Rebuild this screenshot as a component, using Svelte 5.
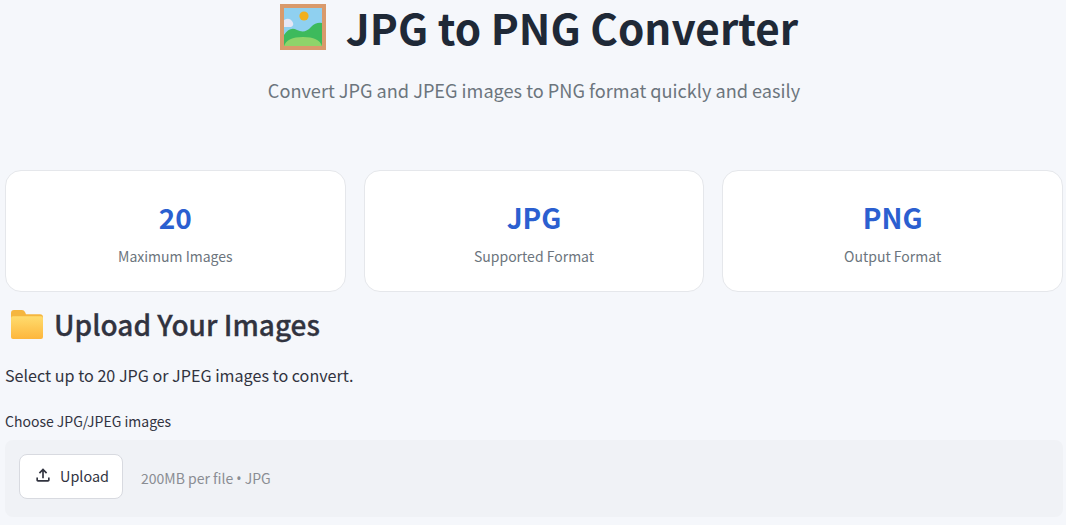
<script>
  const stats = [
    { value: '20', label: 'Maximum Images' },
    { value: 'JPG', label: 'Supported Format' },
    { value: 'PNG', label: 'Output Format' },
  ];
</script>

<div class="page">
  <header class="hero">
    <h1>
      <svg class="picture" viewBox="0 0 46 46" width="46" height="46" aria-hidden="true">
        <rect x="0" y="0" width="46" height="46" fill="#d99a6c"/>
        <rect x="4" y="4" width="38" height="38" fill="#8fd0f0"/>
        <circle cx="24" cy="12" r="4.6" fill="#f2b01e"/>
        <path d="M4 16q5-3 8 1t-1 6H4z" fill="#e6e6f5"/>
        <path d="M4 31q6-9 13-5 8 4 14-3 5-5 11-4v23H4z" fill="#3dba5c"/>
        <path d="M4 42q3-9 19-9t19 9z" fill="#8fd46a"/>
      </svg>
      <span>JPG to PNG Converter</span>
    </h1>
    <p class="subtitle">Convert JPG and JPEG images to PNG format quickly and easily</p>
  </header>

  <section class="stats">
    {#each stats as s}
      <div class="card">
        <div class="value">{s.value}</div>
        <div class="label">{s.label}</div>
      </div>
    {/each}
  </section>

  <h2>
    <svg class="folder" viewBox="1 1 32 28" width="32" height="29" preserveAspectRatio="none" aria-hidden="true">
      <defs>
        <linearGradient id="fold" x1="0" y1="0" x2="0" y2="1">
          <stop offset="0" stop-color="#ffdc6e"/>
          <stop offset="1" stop-color="#fdb63c"/>
        </linearGradient>
      </defs>
      <path d="M1 4q0-3 3-3h8q2 0 3 2l1 2h14q3 0 3 3v2H1z" fill="#f5b63f"/>
      <rect x="1" y="7" width="32" height="22" rx="2" fill="url(#fold)"/>
    </svg>
    <span>Upload Your Images</span>
  </h2>

  <p class="intro">Select up to 20 JPG or JPEG images to convert.</p>

  <div class="field-label">Choose JPG/JPEG images</div>
  <div class="dropzone">
    <button class="upload">
      <svg viewBox="0 0 24 24" width="20" height="20" aria-hidden="true">
        <path d="M18 15v3H6v-3H4v3c0 1.1.9 2 2 2h12c1.1 0 2-.9 2-2v-3zM7 9l1.41 1.41L11 7.83V16h2V7.83l2.59 2.58L17 9l-5-5z" fill="#31333f"/>
      </svg>
      Upload
    </button>
    <span class="hint">200MB per file <span class="dot">•</span> JPG</span>
  </div>
</div>

<style>
  :global(body) {
    margin: 0;
    background: #f5f7fb;
    overflow: hidden;
  }

  .page {
    height: 525px;
    padding: 0 3px 0 5px;
    box-sizing: border-box;
    overflow: hidden;
    font-family: "Noto Sans CJK SC", "Noto Sans", sans-serif;
    color: #31333f;
  }

  .hero { text-align: center; }

  h1 {
    margin: 0;
    height: 54px;
    display: flex; align-items: center; justify-content: center; gap: 20px;
    font-size: 42.2px; font-weight: 700; line-height: 54px;
    color: #1f2937;
    padding-left: 10px;
  }

  .subtitle {
    margin: 20px 0 0;
    font-size: 18.15px; line-height: 32px;
    color: #6c757d;
  }

  .stats {
    display: grid;
    grid-template-columns: repeat(3, 1fr);
    gap: 18px;
    margin-top: 64px;
  }

  .card {
    height: 122px;
    box-sizing: border-box;
    padding-top: 2px;
    background: #fff;
    border: 1px solid #e5e7eb;
    border-radius: 16px;
    display: flex; flex-direction: column; align-items: center; justify-content: center;
  }
  .value {
    font-size: 28px; font-weight: 700; line-height: 40px;
    color: #2b5fd0;
  }
  .label {
    margin-top: 8px;
    font-size: 14px; line-height: 22px;
    color: #6c757d;
  }

  h2 {
    margin: 10px 0 0;
    display: flex; align-items: center; gap: 11px;
    font-size: 28px; font-weight: 500; line-height: 44px;
    -webkit-text-stroke: 0.3px #31333f;
    color: #31333f;
    padding-left: 6px;
  }

  .intro {
    margin: 16px 0 0;
    font-size: 16.14px; line-height: 26px;
    color: #31333f;
  }

  .field-label {
    margin-top: 23px;
    font-size: 14px; line-height: 20px;
    color: #31333f;
  }

  .dropzone {
    margin-top: 9px;
    height: 77px;
    box-sizing: border-box;
    background: #f0f2f6;
    border-radius: 8px;
    padding: 0 14px 5px;
    display: flex; align-items: center; gap: 18px;
  }

  .upload {
    height: 45px; width: 104px;
    box-sizing: border-box;
    display: flex; align-items: center; justify-content: center; gap: 7px;
    background: #fff;
    border: 1px solid #d8dae0;
    border-radius: 8px;
    font-family: inherit; font-size: 14.4px;
    color: #31333f;
    padding: 0 0 2px;
  }

  .hint {
    font-size: 14px;
    color: #8a8d93;
    padding-top: 3px;
  }
  .dot { font-family: "Noto Sans", sans-serif; }
</style>
